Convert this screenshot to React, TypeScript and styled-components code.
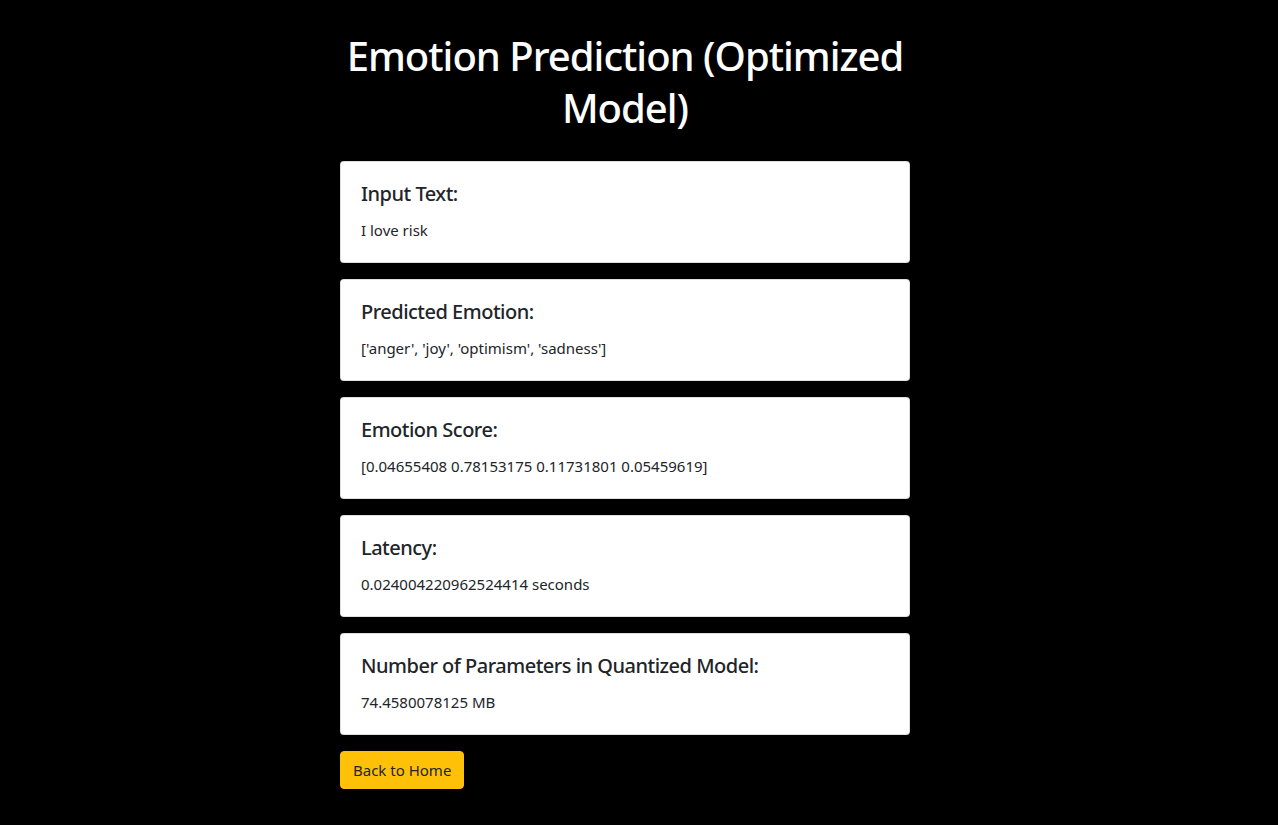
import React from "react";
import styled, { createGlobalStyle } from "styled-components";

const GlobalStyle = createGlobalStyle`
  html, body { margin: 0; padding: 0; background: #000; }
  body {
    font-family: "Noto Sans", "Open Sans", Arial, sans-serif;
    color: #212529;
    -webkit-font-smoothing: antialiased;
  }
  * { box-sizing: border-box; }
`;

const Page = styled.div`
  min-height: 825px;
  background: #000;
  padding: 30px 28px 30px 0;
`;

const Container = styled.main`
  width: 570px;
  margin: 0 auto;
  display: flex;
  flex-direction: column;
`;

const Title = styled.h1`
  margin: 0 0 27px;
  color: #fff;
  font-size: 40px;
  font-weight: 500;
  line-height: 52px;
  letter-spacing: -1px;
  text-align: center;
`;

const Card = styled.section`
  background: #fff;
  border: 1px solid rgba(0, 0, 0, 0.125);
  border-radius: 4px;
  padding: 20px;
  margin-bottom: 16px;
  height: 102px;
`;

const CardTitle = styled.h5`
  margin: 0 0 12px;
  font-size: 20px;
  font-weight: 500;
  line-height: 24px;
  letter-spacing: -0.5px;
  color: #212529;
`;

const CardText = styled.p`
  margin: 0;
  font-size: 15px;
  line-height: 24px;
  color: #212529;
`;

const Button = styled.a`
  align-self: flex-start;
  display: inline-block;
  padding: 6px 12px;
  font-size: 15px;
  line-height: 24px;
  height: 38px;
  color: #212529;
  background: #ffc107;
  border: 1px solid #ffc107;
  border-radius: 4px;
  text-decoration: none;
  cursor: pointer;
`;

const items = [
  { title: "Input Text:", value: "I love risk" },
  { title: "Predicted Emotion:", value: "['anger', 'joy', 'optimism', 'sadness']" },
  { title: "Emotion Score:", value: "[0.04655408 0.78153175 0.11731801 0.05459619]" },
  { title: "Latency:", value: "0.024004220962524414 seconds" },
  { title: "Number of Parameters in Quantized Model:", value: "74.4580078125 MB" },
];

export default function App() {
  return (
    <>
      <GlobalStyle />
      <Page>
        <Container>
          <Title>Emotion Prediction (Optimized Model)</Title>
          {items.map((it) => (
            <Card key={it.title}>
              <CardTitle>{it.title}</CardTitle>
              <CardText>{it.value}</CardText>
            </Card>
          ))}
          <Button href="#">Back to Home</Button>
        </Container>
      </Page>
    </>
  );
}
